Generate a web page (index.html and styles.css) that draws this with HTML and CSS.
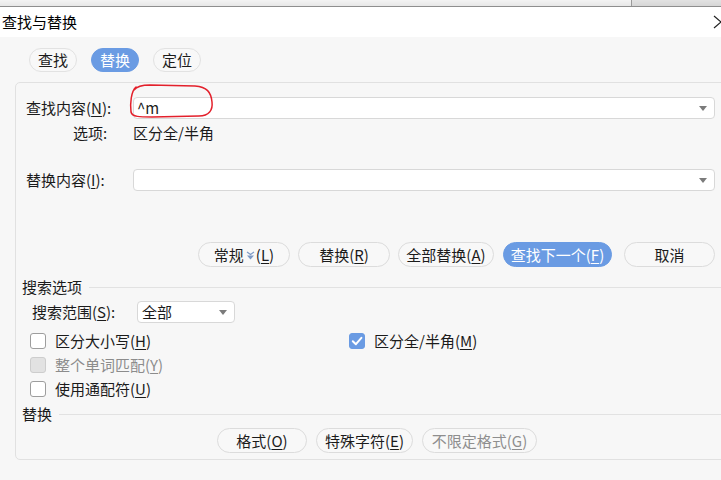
FILE: index.html
```html
<!DOCTYPE html>
<html lang="zh-CN">
<head>
<meta charset="utf-8">
<title>查找与替换</title>
<link rel="stylesheet" href="styles.css">
</head>
<body>
<div class="window">
  <div class="topbar"><div class="tb-left"></div><div class="tb-right"></div></div>
  <div class="titlebar">
    <span class="title">查找与替换</span>
    <svg class="close" width="16" height="14" viewBox="0 0 16 14"><path d="M1 1 L15 13 M15 1 L1 13" stroke="#222" stroke-width="1.2" fill="none"/></svg>
  </div>
  <div class="content">
    <div class="tabs">
      <span class="tab">查找</span>
      <span class="tab active">替换</span>
      <span class="tab">定位</span>
    </div>
    <div class="panel">
      <div class="field-row find-row">
        <span class="lbl">查找内容(<u>N</u>):</span>
        <div class="combo"><span class="val">^m</span><i class="caret"></i></div>
      </div>
      <div class="opt-row">
        <span class="opt-lbl">选项:</span>
        <span class="opt-val">区分全/半角</span>
      </div>
      <div class="field-row repl-row">
        <span class="lbl">替换内容(<u>I</u>):</span>
        <div class="combo"><span class="val"></span><i class="caret"></i></div>
      </div>
      <div class="btn-row">
        <span class="btn w92">常规<svg class="more" width="9" height="10" viewBox="0 0 9 10"><path d="M1 2 L4.5 4.5 L8 2" stroke="#7d9ac6" stroke-width="1.2" fill="none"/><path d="M1 5.5 L8 5.5 L4.5 9.5 Z" fill="#7d9ac6"/></svg>(<u>L</u>)</span>
        <span class="btn w92">替换(<u>R</u>)</span>
        <span class="btn w96">全部替换(<u>A</u>)</span>
        <span class="btn primary w109">查找下一个(<u>F</u>)</span>
        <span class="btn cancel w91">取消</span>
      </div>
      <div class="group-head"><span>搜索选项</span><i class="rule"></i></div>
      <div class="range-row">
        <span class="range-lbl">搜索范围(<u>S</u>):</span>
        <div class="select"><span>全部</span><i class="caret"></i></div>
      </div>
      <div class="checks">
        <div class="check"><i class="box"></i><span>区分大小写(<u>H</u>)</span></div>
        <div class="check"><i class="box checked"><svg width="16" height="16" viewBox="0 0 16 16"><path d="M3.8 8.2 L6.9 11.2 L12.4 4.8" stroke="#fff" stroke-width="2" fill="none" stroke-linecap="round" stroke-linejoin="round"/></svg></i><span>区分全/半角(<u>M</u>)</span></div>
        <div class="check disabled"><i class="box"></i><span>整个单词匹配(<u>Y</u>)</span></div>
        <div></div>
        <div class="check"><i class="box"></i><span>使用通配符(<u>U</u>)</span></div>
        <div></div>
      </div>
      <div class="group-head repl-head"><span>替换</span><i class="rule"></i></div>
      <div class="btn-row2">
        <span class="btn w90">格式(<u>O</u>)</span>
        <span class="btn w97">特殊字符(<u>E</u>)</span>
        <span class="btn disabled w115">不限定格式(<u>G</u>)</span>
      </div>
    </div>
  </div>
  <svg class="annot" width="721" height="480" viewBox="0 0 721 480"><path d="M136 87 C131 91 130 104 131 112 C132 117 140 117 152 117 L199 116 C209 116 213 110 212 102 C211 92 207 87 195 86 L150 85 C142 85 137 86 134 90" stroke="#e3202b" stroke-width="1.5" fill="none" stroke-linecap="round"/></svg>
</div>
</body>
</html>
```

FILE: styles.css
```css
* { box-sizing: border-box; }

body {
  margin: 0;
  width: 721px;
  height: 480px;
  overflow: hidden;
  font-family: "Noto Sans CJK SC", "Noto Sans", sans-serif;
  font-size: 15px;
  color: #1b1b1b;
  background: #f7f7f7;
}

u { text-decoration: underline; text-underline-offset: 2px; text-decoration-thickness: 1px; }

.window {
  position: relative;
  height: 480px;
  display: flex;
  flex-direction: column;
}

.topbar {
  display: flex;
  height: 7px;
  border-bottom: 1px solid #8e8e8e;
}
.tb-left { width: 631px; background: linear-gradient(#f3f3f3, #e7e7e7); }
.tb-right { flex: 1; border-left: 1px solid #9a9a9a; background: linear-gradient(#e2e2e2, #d6d6d6); }

.titlebar {
  height: 30px;
  background: #fff;
  display: flex;
  align-items: center;
  justify-content: space-between;
  padding-left: 2px;
  overflow: hidden;
}
.title { line-height: 20px; color: #000; }
.close { flex-shrink: 0; margin-right: -8px; }

.content {
  flex: 1;
  background: #f7f7f7;
  overflow: hidden;
}

.tabs {
  display: flex;
  gap: 14px;
  padding: 11px 0 0 29px;
}
.tab {
  height: 24px;
  border: 1px solid #e2e2e2;
  border-radius: 12px;
  padding: 0 8px;
  line-height: 22px;
  background: #f8f8f8;
}
.tab.active { background: #6a9be3; border-color: #6a9be3; color: #fff; }

.panel {
  margin: 10px 0 0 15px;
  width: 740px;
  border: 1px solid #e1e1e1;
  border-radius: 5px;
  padding-bottom: 6px;
}

.field-row {
  display: flex;
  align-items: center;
  height: 22px;
}
.find-row { margin-top: 14px; }
.repl-row { margin-top: 26px; }
.lbl { width: 117px; padding-left: 10px; line-height: 20px; }

.combo {
  width: 582px;
  height: 22px;
  border: 1px solid #d8d8d8;
  border-radius: 4px;
  background: #fff;
  display: flex;
  align-items: center;
  justify-content: space-between;
  padding: 0 7px 0 3px;
  line-height: 20px;
}
.caret {
  width: 0;
  height: 0;
  border-left: 4.5px solid transparent;
  border-right: 4.5px solid transparent;
  border-top: 5px solid #7b7b7b;
}

.opt-row {
  display: flex;
  margin-top: 4px;
  height: 20px;
  line-height: 20px;
}
.opt-lbl { width: 117px; padding-left: 57px; }

.btn-row {
  display: flex;
  margin-top: 51px;
  padding-left: 182px;
  gap: 8px;
}
.btn {
  height: 25px;
  border: 1px solid #dcdcdc;
  border-radius: 13px;
  background: #f8f8f8;
  display: flex;
  align-items: center;
  justify-content: center;
  line-height: 20px;
  white-space: nowrap;
}
.btn.primary { background: #6a9be3; border-color: #6a9be3; color: #fff; margin-left: 1px; }
.btn.cancel { margin-left: 4px; }
.btn.disabled { color: #8e8e8e; }
.more { margin: 0 1px 0 2px; }
.w90 { width: 90px; }
.w91 { width: 91px; }
.w92 { width: 92px; }
.w96 { width: 96px; }
.w97 { width: 97px; }
.w109 { width: 109px; }
.w115 { width: 115px; }

.group-head {
  display: flex;
  align-items: center;
  height: 20px;
  line-height: 20px;
  margin-top: 10px;
  padding-left: 6px;
}
.group-head .rule { flex: 1; height: 1px; background: #e2e2e2; margin-left: 7px; }
.repl-head { margin-top: 3px; }

.range-row {
  display: flex;
  align-items: center;
  margin-top: 4px;
  height: 22px;
  padding-left: 16px;
}
.range-lbl { width: 105px; line-height: 20px; }
.select {
  width: 98px;
  height: 22px;
  border: 1px solid #d8d8d8;
  border-radius: 4px;
  background: #fff;
  display: flex;
  align-items: center;
  justify-content: space-between;
  padding: 0 7px 0 4px;
  line-height: 20px;
}

.checks {
  display: grid;
  grid-template-columns: 319px 1fr;
  grid-auto-rows: 24px;
  margin-top: 6px;
  padding-left: 14px;
}
.check {
  display: flex;
  align-items: center;
  gap: 9px;
  line-height: 20px;
}
.box {
  width: 16px;
  height: 16px;
  border: 1px solid #9d9d9d;
  border-radius: 3px;
  background: #fff;
  display: block;
}
.box.checked { background: #6a9be3; border-color: #6a9be3; }
.box.checked svg { display: block; margin: -1px; }
.check.disabled { color: #8c8c8c; }
.check.disabled .box { background: #e2e2e2; border-color: #cdcdcd; }

.btn-row2 {
  display: flex;
  gap: 9px;
  margin-top: 4px;
  padding-left: 201px;
}

.annot {
  position: absolute;
  left: 0;
  top: 0;
  pointer-events: none;
}
```
